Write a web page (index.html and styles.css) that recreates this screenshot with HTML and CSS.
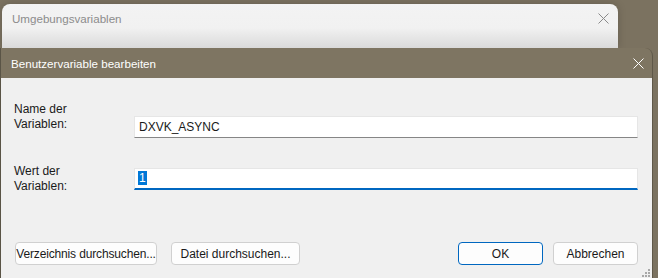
FILE: index.html
```html
<!DOCTYPE html>
<html lang="de">
<head>
    <meta charset="UTF-8">
    <title>Benutzervariable bearbeiten</title>
    <link rel="stylesheet" href="styles.css">
</head>
<body>
    <div class="back-window">
        <span class="back-title">Umgebungsvariablen</span>
        <svg class="close" width="11" height="11" viewBox="0 0 11 11">
            <path d="M0.5 0.5 L10.5 10.5 M10.5 0.5 L0.5 10.5" stroke="#8a8a8a" stroke-width="1" fill="none"/>
        </svg>
    </div>

    <div class="dialog">
        <div class="titlebar">
            <span>Benutzervariable bearbeiten</span>
            <svg class="close" width="11" height="11" viewBox="0 0 11 11">
                <path d="M0.5 0.5 L10.5 10.5 M10.5 0.5 L0.5 10.5" stroke="#ffffff" stroke-width="1" fill="none"/>
            </svg>
        </div>
        <div class="content">
            <div class="field field-name">
                <label>Name der<br>Variablen:</label>
                <div class="input">DXVK_ASYNC</div>
            </div>
            <div class="field field-value">
                <label>Wert der<br>Variablen:</label>
                <div class="input focused"><span class="sel">1</span></div>
            </div>
            <div class="buttons">
                <div class="group">
                    <button class="btn btn-dir">Verzeichnis durchsuchen...</button>
                    <button class="btn btn-file">Datei durchsuchen...</button>
                </div>
                <div class="group group-right">
                    <button class="btn btn-ok">OK</button>
                    <button class="btn">Abbrechen</button>
                </div>
            </div>
            <svg class="grip" width="9" height="9" viewBox="0 0 9 9">
                <rect x="6" y="0" width="2" height="2" fill="#a8a8a8"/>
                <rect x="3" y="3" width="2" height="2" fill="#a8a8a8"/>
                <rect x="6" y="3" width="2" height="2" fill="#a8a8a8"/>
                <rect x="0" y="6" width="2" height="2" fill="#a8a8a8"/>
                <rect x="3" y="6" width="2" height="2" fill="#a8a8a8"/>
                <rect x="6" y="6" width="2" height="2" fill="#a8a8a8"/>
            </svg>
        </div>
    </div>
</body>
</html>
```

FILE: styles.css
```css
body {
    margin: 0;
    height: 278px;
    overflow: hidden;
    background: #7b7260;
    font-family: 'Liberation Sans', Arial, sans-serif;
    font-size: 12px;
    color: #1a1a1a;
}
.back-window {
    margin: 4px 0 0 2px;
    width: 616px;
    height: 44px;
    box-sizing: border-box;
    padding: 4px 9px 0 10px;
    display: flex;
    justify-content: space-between;
    align-items: flex-start;
    background: linear-gradient(to bottom, #f3f3f3 0, #f1f1f1 24px, #dadada 44px);
    border-radius: 8px 8px 0 0;
    box-shadow: 0 0 8px rgba(0, 0, 0, 0.18);
}
.back-title {
    line-height: 22px;
    font-size: 11.6px;
    color: #8c8c8c;
}
.back-window .close {
    margin-top: 5px;
}
.dialog {
    width: 653px;
    box-sizing: border-box;
    border-left: 1px solid #5a5446;
    border-right: 1px solid #5f5849;
    border-radius: 0 8px 0 0;
    background: #7e7562;
}
.titlebar {
    height: 30px;
    display: flex;
    justify-content: space-between;
    align-items: center;
    padding: 0 8px 0 10px;
    color: #ffffff;
    font-size: 11.6px;
}
.content {
    position: relative;
    height: 200px;
    box-sizing: border-box;
    padding: 23px 13px 0 13px;
    background: #f0f0f0;
}
.field {
    display: grid;
    grid-template-columns: 120px 504px;
    align-items: start;
}
.field label {
    line-height: 15px;
    padding-top: 1px;
}
.field-value {
    margin-top: 25px;
}
.input {
    height: 22px;
    box-sizing: border-box;
    padding-left: 4px;
    line-height: 20px;
    background: #ffffff;
    border: 1px solid #e6e6e6;
    border-bottom: 1px solid #868686;
}
.field-name .input {
    margin-top: 15px;
}
.field-value .input {
    margin-top: 5px;
    border-bottom: 2px solid #0067c0;
    line-height: 19px;
}
.sel {
    display: inline-block;
    background: #0078d7;
    color: #ffffff;
    line-height: 14px;
    padding: 0 1px;
    margin-left: -1px;
}
.buttons {
    margin-top: 48px;
    margin-left: 1px;
    display: flex;
    justify-content: space-between;
    width: 623px;
}
.group {
    display: flex;
    gap: 14px;
}
.group-right {
    gap: 10px;
}
.btn {
    height: 23px;
    width: 85px;
    padding: 0;
    white-space: nowrap;
    font-family: 'Liberation Sans', Arial, sans-serif;
    font-size: 12px;
    color: #1a1a1a;
    background: #fdfdfd;
    border: 1px solid #d0d0d0;
    border-radius: 4px;
}
.btn-dir {
    width: 142px;
    letter-spacing: -0.15px;
}
.btn-file {
    width: 129px;
}
.btn-ok {
    border-color: #0067c0;
}
.grip {
    position: absolute;
    right: 1px;
    bottom: 0;
}
```
